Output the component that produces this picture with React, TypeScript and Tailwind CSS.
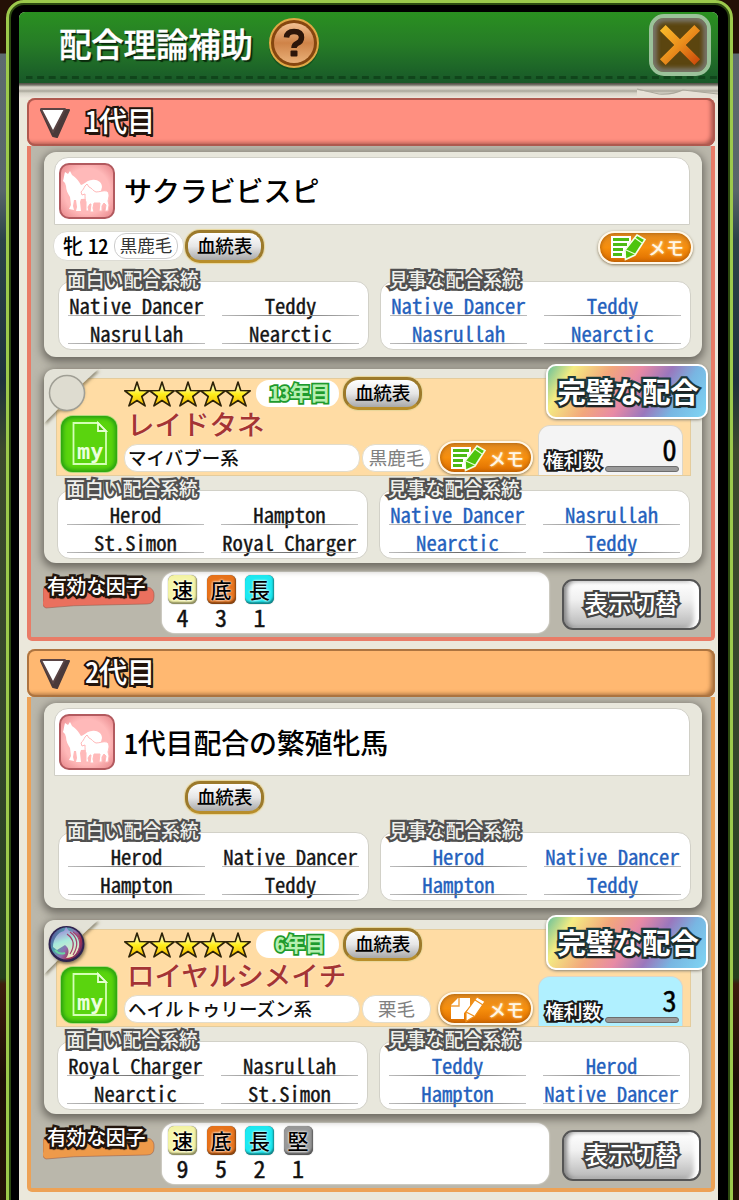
import React from 'react';

type Factor = { name: string; count: number; tone: string };
type Pair = { good: string[]; great: string[] };
type Generation = {
  title: string;
  bar: string;
  edge: string;
  brush: string;
  mare: { name: string; sex?: string; age?: number; coat?: string; memo: boolean; lines: Pair };
  stallion: {
    name: string;
    year: string;
    family: string;
    coat: string;
    memoFilled: boolean;
    orb: boolean;
    rights: number;
    rightsTone: string;
    lines: Pair;
  };
  factors: Factor[];
};

const SPEED = 'bg-[#f5f5a6]';
const STAMINA = 'bg-[#e8721a]';
const LONG = 'bg-[#1ceaf2]';
const SOLID = 'bg-[#989898]';

const generations: Generation[] = [
  {
    title: '1代目',
    bar: 'bg-[#ff8f80] shadow-[inset_0_0_0_2px_#b0594f,inset_-4px_-3px_4px_#a8564c]',
    edge: 'border-[#e97c67]',
    brush: '#ea705e',
    mare: {
      name: 'サクラビビスピ',
      sex: '牝',
      age: 12,
      coat: '黒鹿毛',
      memo: true,
      lines: {
        good: ['Native Dancer', 'Teddy', 'Nasrullah', 'Nearctic'],
        great: ['Native Dancer', 'Teddy', 'Nasrullah', 'Nearctic'],
      },
    },
    stallion: {
      name: 'レイドタネ',
      year: '13年目',
      family: 'マイバブー系',
      coat: '黒鹿毛',
      memoFilled: true,
      orb: false,
      rights: 0,
      rightsTone: 'bg-[#f4f4f4]',
      lines: {
        good: ['Herod', 'Hampton', 'St.Simon', 'Royal Charger'],
        great: ['Native Dancer', 'Nasrullah', 'Nearctic', 'Teddy'],
      },
    },
    factors: [
      { name: '速', count: 4, tone: SPEED },
      { name: '底', count: 3, tone: STAMINA },
      { name: '長', count: 1, tone: LONG },
    ],
  },
  {
    title: '2代目',
    bar: 'bg-[#ffb871] shadow-[inset_0_0_0_2px_#ad7440,inset_-4px_-3px_4px_#a8713f]',
    edge: 'border-[#eda256]',
    brush: '#ee9a4a',
    mare: {
      name: '1代目配合の繁殖牝馬',
      memo: false,
      lines: {
        good: ['Herod', 'Native Dancer', 'Hampton', 'Teddy'],
        great: ['Herod', 'Native Dancer', 'Hampton', 'Teddy'],
      },
    },
    stallion: {
      name: 'ロイヤルシメイチ',
      year: '6年目',
      family: 'ヘイルトゥリーズン系',
      coat: '栗毛',
      memoFilled: false,
      orb: true,
      rights: 3,
      rightsTone: 'bg-[#b0f0ff]',
      lines: {
        good: ['Royal Charger', 'Nasrullah', 'Nearctic', 'St.Simon'],
        great: ['Teddy', 'Herod', 'Hampton', 'Native Dancer'],
      },
    },
    factors: [
      { name: '速', count: 9, tone: SPEED },
      { name: '底', count: 5, tone: STAMINA },
      { name: '長', count: 2, tone: LONG },
      { name: '堅', count: 1, tone: SOLID },
    ],
  },
];

function MareIcon() {
  return (
    <svg viewBox="0 0 56 56" className="h-14 w-14 shrink-0">
      <defs>
        <radialGradient id="mareBg" cx="50%" cy="50%" r="70%">
          <stop offset="0.6" stopColor="#ffb9b9" />
          <stop offset="1" stopColor="#e58286" />
        </radialGradient>
      </defs>
      <rect x="1" y="1" width="54" height="54" rx="9" fill="url(#mareBg)" stroke="#b25a5f" strokeWidth="2" />
      <path
        d="M6 9 L9 11 L11 8 L13 12 C18 15 20 19 22 22 C26 21 28 17 33 17 C38 16 43 19 43 24 C42 29 40 32 38 35 L22 36 L21 39 L22 48 L17 48 L18 44 L17 37 L15 37 L14 43 L15 47 L10 46 L12 42 L11 34 C9 31 7 27 7 23 L6 20 L4 18 C5 15 5 12 6 9 Z"
        fill="#fff"
      />
      <path
        d="M26 23 L28 21 L30 24 C33 25 34 28 37 29 C41 29 44 27 48 28 C51 30 50 34 49 38 L50 42 L49 48 L46 48 L47 42 L45 40 L43 43 L43 48 L40 48 L41 40 L35 40 L34 45 L35 49 L31 49 L32 41 L31 41 L29 44 L30 48 L27 48 L27 39 C26 37 26 34 26 31 L23 32 L22 29 C24 27 25 25 26 23 Z"
        fill="#fff"
        stroke="#ffb9b9"
        strokeWidth="1"
      />
    </svg>
  );
}

function MyIcon() {
  return (
    <div className="relative h-14 w-14 shrink-0 rounded-xl bg-[#5ad40e] shadow-[inset_0_0_4px_2px_#239b12,0_0_0_1px_#b4d980]">
      <svg viewBox="0 0 56 56" className="h-14 w-14">
        <path d="M12.500 7 H37 L45 15 V48 H12.500 Z" fill="none" stroke="#d4ffb5" strokeWidth="1.800" />
        <path d="M37 7 V15 H45 Z" fill="#4cbd10" stroke="#e6ffd2" strokeWidth="1.800" />
      </svg>
      <span className="absolute bottom-[7px] left-[16px] font-['DejaVu_Sans_Mono',monospace] text-[22px] leading-[26px] font-bold text-[#eaffdc]">
        my
      </span>
    </div>
  );
}

function PedigreeButton() {
  return (
    <button className="flex h-[33px] w-[79px] shrink-0 items-center justify-center rounded-[15px] border-[3px] border-[#9c7a2b] border-b-[#b88e2a] bg-linear-to-b from-white via-[#e6e6e6] to-[#a9a9a9] text-[18.700px] leading-none font-medium tracking-[-0.300px] text-black shadow-[0_0_1px_1px_#e8d69a]">
      <span className="-mt-[2px]">血統表</span>
    </button>
  );
}

function MemoButton({ filled }: { filled: boolean }) {
  return (
    <button className="flex h-[33px] w-[95px] shrink-0 items-center rounded-full border-2 border-[#fff7e8] bg-linear-to-b from-[#e08a20] via-[#f78f0c] to-[#dd6c00] shadow-[0_1px_3px_#8b7a5a,inset_0_0_4px_#a05708]">
      {filled ? (
        <svg viewBox="0 0 38 28" className="ml-[9px] h-7 w-[38px]">
          <path d="M2 3 H22 V8 L17 16 V25 H2 Z" fill="#fff" />
          <path d="M4 6.500 H20 M4 11.500 H18 M4 16.500 H14 M4 21.500 H13" stroke="#4dbb13" strokeWidth="3" />
          <path d="M28 2 L36 6.500 L26 22 L16.500 26.500 L16 17 Z" fill="#4dc40c" stroke="#f4ffe8" strokeWidth="1.600" />
          <path d="M26 5 L33 10 M17 17 L26 21" stroke="#e9ffd8" strokeWidth="1.200" />
        </svg>
      ) : (
        <svg viewBox="0 0 38 28" className="ml-[9px] h-7 w-[38px]">
          <path d="M9 3 H21 V12 L15 18 V24 H2 V10 Z" fill="#fff" />
          <path d="M10 3 V11 H2" fill="none" stroke="#f0a040" strokeWidth="1.400" />
          <path d="M28 2 L36 6.500 L26 21 L17 26.500 L17 17 Z" fill="#fff" stroke="#ef8e17" strokeWidth="1.200" />
          <path d="M26 5 L34 10 M17 17 L25 21" stroke="#ef8e17" strokeWidth="1.200" />
        </svg>
      )}
      <span className="ml-[1px] text-[18px] leading-none font-medium text-[#fff6e6] [text-shadow:0_0_3px_#ffdf9e]">メモ</span>
    </button>
  );
}

function Star() {
  return (
    <svg viewBox="1 0.500 24 24" className="-mr-[0.700px] h-[26px] w-[26px]">
      <defs>
        <linearGradient id="starFill" x1="0" y1="0" x2="0" y2="1">
          <stop offset="0.2" stopColor="#fffbb0" />
          <stop offset="0.5" stopColor="#ffef1c" />
          <stop offset="1" stopColor="#f4b400" />
        </linearGradient>
      </defs>
      <path
        d="M13 1.500 L15.500 9.300 L24.300 9.500 L17.400 14.800 L20.500 23.500 L13 18.500 L5.500 23.500 L8.600 14.800 L1.700 9.500 L10.500 9.300 Z"
        fill="url(#starFill)"
        stroke="#2c2208"
        strokeWidth="1.500"
        strokeLinejoin="round"
      />
    </svg>
  );
}

function Lineage({ label, names, blue }: { label: string; names: string[]; blue?: boolean }) {
  return (
    <div className="relative h-[69px] w-[311px] rounded-[13px] border border-[#d2d1c8] bg-white px-[9px] pt-[11px]">
      <span className="absolute -top-[15px] left-[8px] text-[19px] leading-[24px] font-medium tracking-[-0.200px] whitespace-nowrap text-[#f0f0ec] [-webkit-text-stroke:4.500px_#505050] [paint-order:stroke_fill]">
        {label}
      </span>
      <div
        className={
          'relative grid grid-cols-[137px_137px] gap-x-[17px] text-center text-[20.700px] whitespace-pre [-webkit-text-stroke:0.350px_currentColor] [font-feature-settings:"hwid"] ' +
          (blue ? 'text-[#2461bd]' : 'text-[#151515]')
        }
      >
        {names.map((n, i) => (
          <div key={i} className="flex h-[28px] flex-col">
            <span className="h-[22px] leading-[24px]">{n}</span>
            <i className="block h-px bg-linear-to-r from-[#bcbcbc] via-[#707070] to-[#bcbcbc]" />
          </div>
        ))}
      </div>
    </div>
  );
}

function Lineages({ lines }: { lines: Pair }) {
  return (
    <div className="flex gap-[11px]">
      <Lineage label="面白い配合系統" names={lines.good} />
      <Lineage label="見事な配合系統" names={lines.great} blue />
    </div>
  );
}

function MareCard({ mare }: { mare: Generation['mare'] }) {
  return (
    <div className="h-[205px] rounded-xl bg-[#e8e7dc] px-[10px] pt-[5px] shadow-[0_3px_8px_2px_#6d6a62]">
      <div className="flex h-[68px] w-[636px] items-center gap-[9px] rounded-t-[14px] border border-[#d0cfc6] bg-white pl-1">
        <MareIcon />
        <span
          className={
            mare.age
              ? '-mt-[2px] text-[28px] leading-none font-medium tracking-[-0.100px] text-black'
              : "-mt-[1px] text-[28px] leading-none font-medium tracking-[-0.200px] text-black [font-feature-settings:'hwid']"
          }
        >
          {mare.name}
        </span>
      </div>
      <div className="flex h-[42px] items-center">
        <div className="-ml-px w-[132px]">
          {mare.age && (
            <div className="flex h-[30px] w-[131px] items-center rounded-[14px] border border-[#dddcd4] bg-white pl-[9px]">
              <span className="-mt-[1px] text-[20px] leading-none font-medium text-black">{mare.sex}</span>
              <span className="-mt-[1px] ml-[5px] text-[21px] leading-none font-medium tracking-[-0.500px] text-black [font-feature-settings:'hwid']">{mare.age}</span>
              <span className="ml-[6px] flex h-[26px] w-[64px] items-center justify-center rounded-xl border border-[#cccccc] text-[17.500px] leading-none text-[#333]">
                <span className="-mt-[2px]">{mare.coat}</span>
              </span>
            </div>
          )}
        </div>
        <PedigreeButton />
        {mare.memo && (
          <div className="-mr-[1px] mt-[2px] ml-auto">
            <MemoButton filled />
          </div>
        )}
      </div>
      <div className="mt-[14px] ml-1">
        <Lineages lines={mare.lines} />
      </div>
    </div>
  );
}

function Orb({ lit }: { lit: boolean }) {
  return (
    <svg viewBox="0 0 56 58" className="absolute top-0 left-0 h-[58px] w-14 overflow-visible">
      <defs>
        <linearGradient id="orbFill" x1="0" y1="0.200" x2="1" y2="0.800">
          <stop offset="0" stopColor="#5b4b9a" />
          <stop offset="0.300" stopColor="#4fa3ae" />
          <stop offset="0.550" stopColor="#8d6fb0" />
          <stop offset="0.750" stopColor="#a8304f" />
          <stop offset="1" stopColor="#59306b" />
        </linearGradient>
        <linearGradient id="orbHorse" x1="0.300" y1="0" x2="0.600" y2="1">
          <stop offset="0" stopColor="#9a7bd8" />
          <stop offset="0.450" stopColor="#a8eadb" />
          <stop offset="1" stopColor="#f4e8c0" />
        </linearGradient>
        <filter id="orbShade" x="-20%" y="-20%" width="150%" height="150%">
          <feDropShadow dx="1.500" dy="2" stdDeviation="1.500" floodColor="#5c5138" floodOpacity="0.600" />
        </filter>
      </defs>
      <path d="M0 54 V12 Q0 0 12 0 H54 L38 15 A20 20 0 0 1 14 40 Z" fill="#e3e2d7" filter="url(#orbShade)" />
      {lit ? (
        <circle cx="22.500" cy="24" r="18" fill="#2e2250" filter="url(#orbShade)" />
      ) : (
        <circle cx="23" cy="24" r="17.500" fill="#dedcd0" stroke="#a09f95" strokeWidth="1.500" />
      )}
      {lit && (
        <g>
          <circle cx="22.500" cy="23.500" r="16" fill="url(#orbFill)" />
          <path d="M9 27 C9 19 14 12 20 11 L22 7 L25 11 C33 12 38 20 35 28 C33 34 29 38 22 38 C26 33 25 28 21 25 L13 30 Z" fill="url(#orbHorse)" />
          <path d="M26 12 C33 17 35 25 29 35 M23 14 C30 19 31 26 26 34 M29 12 C36 17 38 25 33 33" fill="none" stroke="#a3416c" strokeWidth="1.200" />
          <path d="M11 30 C14 34 18 34 21 33" fill="none" stroke="#6ad6a2" strokeWidth="2" />
        </g>
      )}
    </svg>
  );
}

function StallionCard({ horse }: { horse: Generation['stallion'] }) {
  return (
    <div className="relative h-[194px] rounded-xl bg-[#e8e7dc] px-3 pt-[9px] shadow-[0_3px_8px_2px_#6d6a62]">
      <div className="flex h-[98px] w-[635px] items-end border border-[#e4cc9c] bg-[#ffdca4] pl-1">
        <div className="mb-[3px]">
          <MyIcon />
        </div>
        <div className="ml-[7px] flex h-24 w-[414px] flex-col">
          <div className="flex h-[29px] items-center">
            <div className="flex w-[132px] pt-[1px]">
              {[0, 1, 2, 3, 4].map((i) => (
                <Star key={i} />
              ))}
            </div>
            <div className="flex h-[27px] w-[83px] items-center justify-center rounded-[13px] bg-white pl-[5px] text-[20.500px] leading-none font-bold tracking-[-0.300px] text-[#b6efb0] [-webkit-text-stroke:3.500px_#1e9a2c] [font-feature-settings:'hwid'] [paint-order:stroke_fill]">
              <span className="-mt-[2px]">{horse.year}</span>
            </div>
            <div className="ml-1">
              <PedigreeButton />
            </div>
          </div>
          <div className="flex h-[33px] items-center pl-[3px] text-[27.500px] leading-none font-medium text-[#a43434] [text-shadow:0_0_2px_#fff3dc]">
            <span className="-mt-[2px]">{horse.name}</span>
          </div>
          <div className="flex h-[33px] items-center">
            <div className="flex h-[28px] w-[236px] items-center rounded-[13px] border border-[#e2dccb] bg-white pl-[3px] text-[18.500px] leading-none font-medium text-[#111]">
              <span className="-mt-[1px]">{horse.family}</span>
            </div>
            <div className="ml-[2px] flex h-[28px] w-[69px] items-center justify-center rounded-[13px] border border-[#e2dccb] bg-white text-[18.500px] leading-none text-[#808080]">
              <span className="-mt-[1px]">{horse.coat}</span>
            </div>
            <div className="ml-[7px]">
              <MemoButton filled={horse.memoFilled} />
            </div>
          </div>
        </div>
        <div className={'flex h-[50px] w-[145px] items-end rounded-t-xl border border-b-0 border-[#dcd6c8] pb-[3px] pl-[6px] ' + horse.rightsTone}>
          <span className="mb-[2px] text-[19px] leading-[21px] font-medium tracking-[-0.400px] text-white [-webkit-text-stroke:4px_#1a1a1a] [paint-order:stroke_fill]">
            権利数
          </span>
          <div className="ml-1 flex w-[74px] flex-col items-end">
            <span className="mr-[2px] h-[30px] text-[29px] leading-[25px] text-black [-webkit-text-stroke:0.400px_#000] [font-feature-settings:'hwid']">{horse.rights}</span>
            <i className="block h-[6px] w-full rounded-sm border border-[#6d6d6d] bg-[#9a9a9a]" />
          </div>
        </div>
      </div>
      <div className="mt-[14px] ml-[1px]">
        <Lineages lines={horse.lines} />
      </div>
      <Orb lit={horse.orb} />
      <div className="absolute -top-[5px] -right-[6px] flex h-[55px] w-[162px] items-center justify-center rounded-[10px] border-2 border-white bg-[linear-gradient(122deg,#6cc19a_0%,#f4ec82_14%,#f2a77c_34%,#e88aa5_50%,#9a77bd_66%,#78b6e2_80%,#7fd6f4_100%)] shadow-[0_1px_3px_#8a8578]">
        <span className="pl-[2px] text-[28.500px] leading-none font-bold tracking-[-0.300px] whitespace-nowrap text-white [-webkit-text-stroke:4.500px_#1b3a3c] [paint-order:stroke_fill] [text-shadow:1px_2px_1px_#222]">
          完璧な配合
        </span>
      </div>
    </div>
  );
}

function FactorRow({ factors, brush }: { factors: Factor[]; brush: string }) {
  return (
    <div className="flex h-[74px] pt-[9px]">
      <div className="relative h-[50px] w-[119px] shrink-0">
        <svg viewBox="0 0 118 50" className="absolute top-0 left-0 h-[50px] w-[118px]">
          <path d="M0 17 Q2 14 6 16 L104 15 Q112 16 111 25 Q111 32 104 32 L60 33 Q30 33 3 36 Q-2 34 0 28 Z" fill={brush} stroke="#8f5547" strokeWidth="0.500" />
        </svg>
        <span className="absolute top-[2px] left-[4px] text-[20px] leading-[24px] font-medium tracking-[-0.400px] whitespace-nowrap text-white [-webkit-text-stroke:5px_#22150d] [paint-order:stroke_fill] [text-shadow:1px_3px_1px_#22150d]">
          有効な因子
        </span>
      </div>
      <div className="flex h-[61px] w-[387px] shrink-0 gap-[9.500px] rounded-[13px] bg-white pt-[3px] pl-[6px] shadow-[0_0_2px_#fff]">
        {factors.map((f) => (
          <div key={f.name} className="flex w-[29px] flex-col items-center">
            <div
              className={
                'flex h-[29px] w-[29px] items-center justify-center rounded-md text-[21px] leading-none font-medium text-black shadow-[inset_-1px_-2px_2px_#00000070,0_0_1px_#555] [text-shadow:0_0_3px_#fff,0_0_2px_#fff] ' +
                f.tone
              }
            >
              <span className="-mt-[1px]">{f.name}</span>
            </div>
            <span className="text-[24px] leading-[26px] text-[#111] [-webkit-text-stroke:0.400px_#111] [font-feature-settings:'hwid']">{f.count}</span>
          </div>
        ))}
      </div>
      <button className="mt-[7px] ml-[13px] flex h-[51px] w-[139px] shrink-0 items-center justify-center rounded-[11px] border-2 border-[#555] bg-[linear-gradient(#ffffff_0%,#f0f0f0_40%,#b5b5b5_100%)] text-[23.500px] leading-none font-medium whitespace-nowrap text-white shadow-[inset_-7px_0_4px_-2px_#ffffff,inset_3px_0_4px_#888]">
        <span className="-mt-[2px] [-webkit-text-stroke:4.500px_#444] [paint-order:stroke_fill]">表示切替</span>
      </button>
    </div>
  );
}

function GenerationPanel({ gen }: { gen: Generation }) {
  return (
    <section className="mb-2 w-[688px]">
      <header className={'flex h-12 items-center rounded-lg pl-[11px] ' + gen.bar}>
        <svg viewBox="0 0 34 32" className="h-8 w-[34px]">
          <path d="M3 4 H31 L19 31 L15 30 Z" fill="#4a3a3a" stroke="#4a3a3a" strokeWidth="2" strokeLinejoin="round" />
          <path d="M3 3 H27 L15 26 Z" fill="#fff" stroke="#5a4444" strokeWidth="1.800" strokeLinejoin="round" />
        </svg>
        <span className="-mt-[4px] ml-[13px] text-[28.500px] leading-none font-medium tracking-[-0.500px] text-white [-webkit-text-stroke:4px_#22140c] [font-feature-settings:'hwid'] [paint-order:stroke_fill] [text-shadow:2px_3px_0_#22140c]">
          {gen.title}
        </span>
      </header>
      <div className={'flex h-[495px] flex-col rounded-b-[5px] border-4 border-t-0 bg-[#bab7ab] px-[13px] pt-[6px] ' + gen.edge}>
        <div className="w-[658px]">
          <MareCard mare={gen.mare} />
          <div className="h-3" />
          <StallionCard horse={gen.stallion} />
        </div>
        <div className="-ml-px w-[660px]">
          <FactorRow factors={gen.factors} brush={gen.brush} />
        </div>
      </div>
    </section>
  );
}

export default function App() {
  return (
    <div className="h-[1200px] w-[739px] overflow-hidden bg-[linear-gradient(#241006_0px,#241006_53px,#5d6a6e_54px,#58666a_190px,#2c4448_240px,#1e323c_380px,#3c4a2c_450px,#33452a_760px,#24401c_978px,#3c1c0c_984px,#1c0e06_1080px,#241206_1200px)] pl-[6px] font-['Noto_Sans_CJK_JP','Noto_Sans',sans-serif]">
      <div className="h-[1240px] w-[727px] rounded-[18px] border-[3px] border-[#9cc94c] bg-black pt-[9px] pr-[12px] pl-[10px] shadow-[inset_0_0_0_2px_#2c4a10]">
        <div className="h-[1220px] overflow-hidden rounded-t-md bg-[#ebe8db]">
          <div className="flex h-[71px] flex-col justify-between bg-linear-to-b from-[#2a9020] via-[#267c26] via-45% to-[#185828]">
            <div className="flex h-[62px] items-center">
              <h1 className="ml-[40px] text-[32.500px] leading-none font-medium tracking-[-0.200px] text-white [-webkit-text-stroke:0.400px_#fff] [text-shadow:2px_2px_1px_#0a2a0c,1px_1px_0_#0a2a0c]">配合理論補助</h1>
              <svg viewBox="0 0 54 54" className="ml-[14px] h-[54px] w-[54px]">
                <defs>
                  <linearGradient id="helpFill" x1="0" y1="0" x2="0" y2="1">
                    <stop offset="0" stopColor="#f3c092" />
                    <stop offset="0.500" stopColor="#cf8348" />
                    <stop offset="1" stopColor="#e9b078" />
                  </linearGradient>
                </defs>
                <circle cx="27" cy="29" r="25" fill="#0d3d17" opacity="0.500" />
                <circle cx="27" cy="27" r="24" fill="#85460f" stroke="#e0a845" strokeWidth="2" />
                <circle cx="27" cy="27" r="20" fill="url(#helpFill)" />
                <path d="M19.500 21.500 Q20 15.500 27 15.500 Q34.500 15.500 34.500 21.500 Q34.500 25.500 30 27.500 Q27 29 27 32" fill="none" stroke="#2d160a" strokeWidth="5.500" />
                <rect x="23.500" y="34.500" width="7" height="6" rx="1" fill="#2d160a" />
              </svg>
              <button className="mt-[3px] mr-[7px] ml-auto flex h-[62px] w-[62px] items-center justify-center rounded-[15px] border-4 border-[#9bc29a] bg-[#5b450f] shadow-[inset_0_0_4px_4px_#77756a]">
                <svg viewBox="0 0 46 46" className="h-[44px] w-[44px]">
                  <defs>
                    <linearGradient id="closeFill" x1="0" y1="0" x2="1" y2="1">
                      <stop offset="0" stopColor="#fbc02c" />
                      <stop offset="0.500" stopColor="#ea8e1c" />
                      <stop offset="1" stopColor="#c74208" />
                    </linearGradient>
                  </defs>
                  <path d="M8 2 L23 17 L38 2 L44 8 L29 23 L44 38 L38 44 L23 29 L8 44 L2 38 L17 23 L2 8 Z" fill="url(#closeFill)" />
                </svg>
              </button>
            </div>
            <i className="mb-[4px] ml-[7px] block h-[3px] bg-[repeating-linear-gradient(90deg,#10451b_0px,#10451b_6px,transparent_7px,transparent_10.600px,#10451b_11.600px)]" />
          </div>
          <div className="h-[15px] bg-[linear-gradient(#4c4a40_0px,#77756b_2px,#d8d5c9_4px,#d2cfc3_6px,#a9a69a_8px,#d4d1c5_10px,#ece6dc_15px)]">
            <svg viewBox="0 0 699 15" className="block h-[15px] w-[699px]">
              <path d="M618 15 L618 7 L645 11 Q655 12 664 7 L699 11 V15 Z" fill="#e6e1d6" />
              <path d="M618 6 L640 11 Q653 12 664 7 L699 11" fill="none" stroke="#aaa79b" strokeWidth="1.200" />
            </svg>
          </div>
          <main className="pl-2">
            {generations.map((g) => (
              <GenerationPanel key={g.title} gen={g} />
            ))}
          </main>
        </div>
      </div>
    </div>
  );
}
